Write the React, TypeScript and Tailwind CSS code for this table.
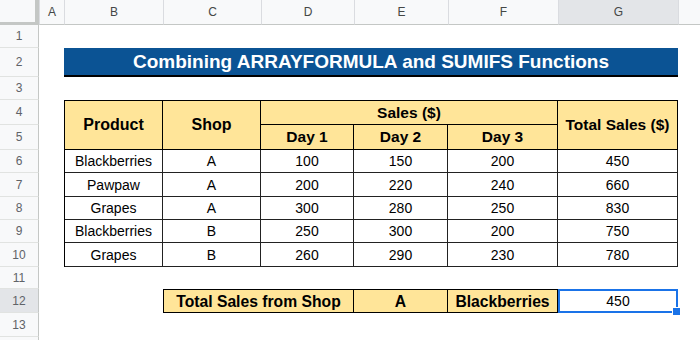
import React from "react";

const font = { fontFamily: '"Liberation Sans", Arial, sans-serif' };

const colLetters = ["A", "B", "C", "D", "E", "F", "G", ""];
const rowNums = [1, 2, 3, 4, 5, 6, 7, 8, 9, 10, 11, 12, 13, 14];

const data = [
  ["Blackberries", "A", "100", "150", "200", "450"],
  ["Pawpaw", "A", "200", "220", "240", "660"],
  ["Grapes", "A", "300", "280", "250", "830"],
  ["Blackberries", "B", "250", "300", "200", "750"],
  ["Grapes", "B", "260", "290", "230", "780"],
];

export default function App() {
  return (
    <div
      className="w-[700px] h-[340px] overflow-hidden bg-white grid grid-cols-[39px_25px_99px_98px_93px_94px_110px_120px_22px] grid-rows-[25px_23px_29px_23px_25px_25px_23px_24px_23px_23px_24px_22px_24px_24px_23px]"
      style={font}
    >
      {/* corner */}
      <div className="col-start-1 row-start-1 bg-[#f8f9fa] border-r-[4px] border-b-[3px] border-[#c4c7c5]" />
      {/* column headers */}
      {colLetters.map((l, i) => (
        <div
          key={"c" + i}
          className={`row-start-1 flex items-center justify-center text-[12px] text-[#444746] border-b border-b-[#c4c7c5] border-l border-l-[#dadce0] ${
            l === "G" ? "bg-[#e3e5e8]" : "bg-[#f8f9fa]"
          }`}
          style={{ gridColumnStart: i + 2 }}
        >
          {l}
        </div>
      ))}
      {/* row headers */}
      {rowNums.map((n) => (
        <div
          key={"r" + n}
          className={`col-start-1 flex items-center justify-center text-[12px] text-[#5f6368] border-r border-r-[#c4c7c5] border-b border-b-[#e1e3e1] ${
            n === 12 ? "bg-[#e3e5e8]" : "bg-[#f8f9fa]"
          }`}
          style={{ gridRowStart: n + 1 }}
        >
          {n < 14 ? n : ""}
        </div>
      ))}

      {/* title */}
      <div className="col-start-3 col-span-6 row-start-3 bg-[#0b5394] border-b-2 border-black flex items-center justify-center pt-[1px] text-white font-bold text-[19px]">
        Combining ARRAYFORMULA and SUMIFS Functions
      </div>

      {/* table */}
      <div className="col-start-3 col-span-6 row-start-5 row-span-7 border-l border-t border-black grid grid-cols-[98px_98px_93px_94px_110px_120px] grid-rows-[24px_25px_23px_24px_23px_23px_24px] text-black">
        <div className="row-span-2 bg-[#ffe599] border-r border-b border-black flex items-center justify-center font-bold text-[16px]">
          Product
        </div>
        <div className="row-span-2 bg-[#ffe599] border-r border-b border-black flex items-center justify-center font-bold text-[16px]">
          Shop
        </div>
        <div className="col-span-3 bg-[#ffe599] border-r border-b border-black flex items-center justify-center font-bold text-[15.5px]">
          Sales ($)
        </div>
        <div className="row-span-2 bg-[#ffe599] border-r border-b border-black flex items-center justify-center font-bold text-[15.5px]">
          Total Sales ($)
        </div>
        <div className="col-start-3 row-start-2 bg-[#ffe599] border-r border-b border-black flex items-center justify-center font-bold text-[15.5px]">
          Day 1
        </div>
        <div className="col-start-4 row-start-2 bg-[#ffe599] border-r border-b border-black flex items-center justify-center font-bold text-[15.5px]">
          Day 2
        </div>
        <div className="col-start-5 row-start-2 bg-[#ffe599] border-r border-b border-black flex items-center justify-center font-bold text-[15.5px]">
          Day 3
        </div>
        {data.map((row, ri) =>
          row.map((v, ci) => (
            <div
              key={ri + "-" + ci}
              className="border-r border-b border-[#222] flex items-center justify-center pt-[1px] text-[14px]"
            >
              {v}
            </div>
          ))
        )}
      </div>

      {/* row 12 lookup */}
      <div className="col-start-4 col-span-4 row-start-13 border border-black bg-[#ffe599] flex font-bold text-[15.7px] text-black">
        <div className="w-[190px] border-r border-black flex items-center justify-center pt-[2px]">
          Total Sales from Shop
        </div>
        <div className="w-[94px] border-r border-black flex items-center justify-center pt-[2px]">A</div>
        <div className="flex-1 flex items-center justify-center pt-[2px]">Blackberries</div>
      </div>
      <div className="col-start-8 row-start-13 relative border-2 border-[#1a73e8] flex items-center justify-center pt-[1px] text-[14px] text-black">
        450
        <div className="absolute -right-[5px] -bottom-[5px] w-[7px] h-[7px] bg-[#1a73e8] border border-white box-content" />
      </div>
    </div>
  );
}
